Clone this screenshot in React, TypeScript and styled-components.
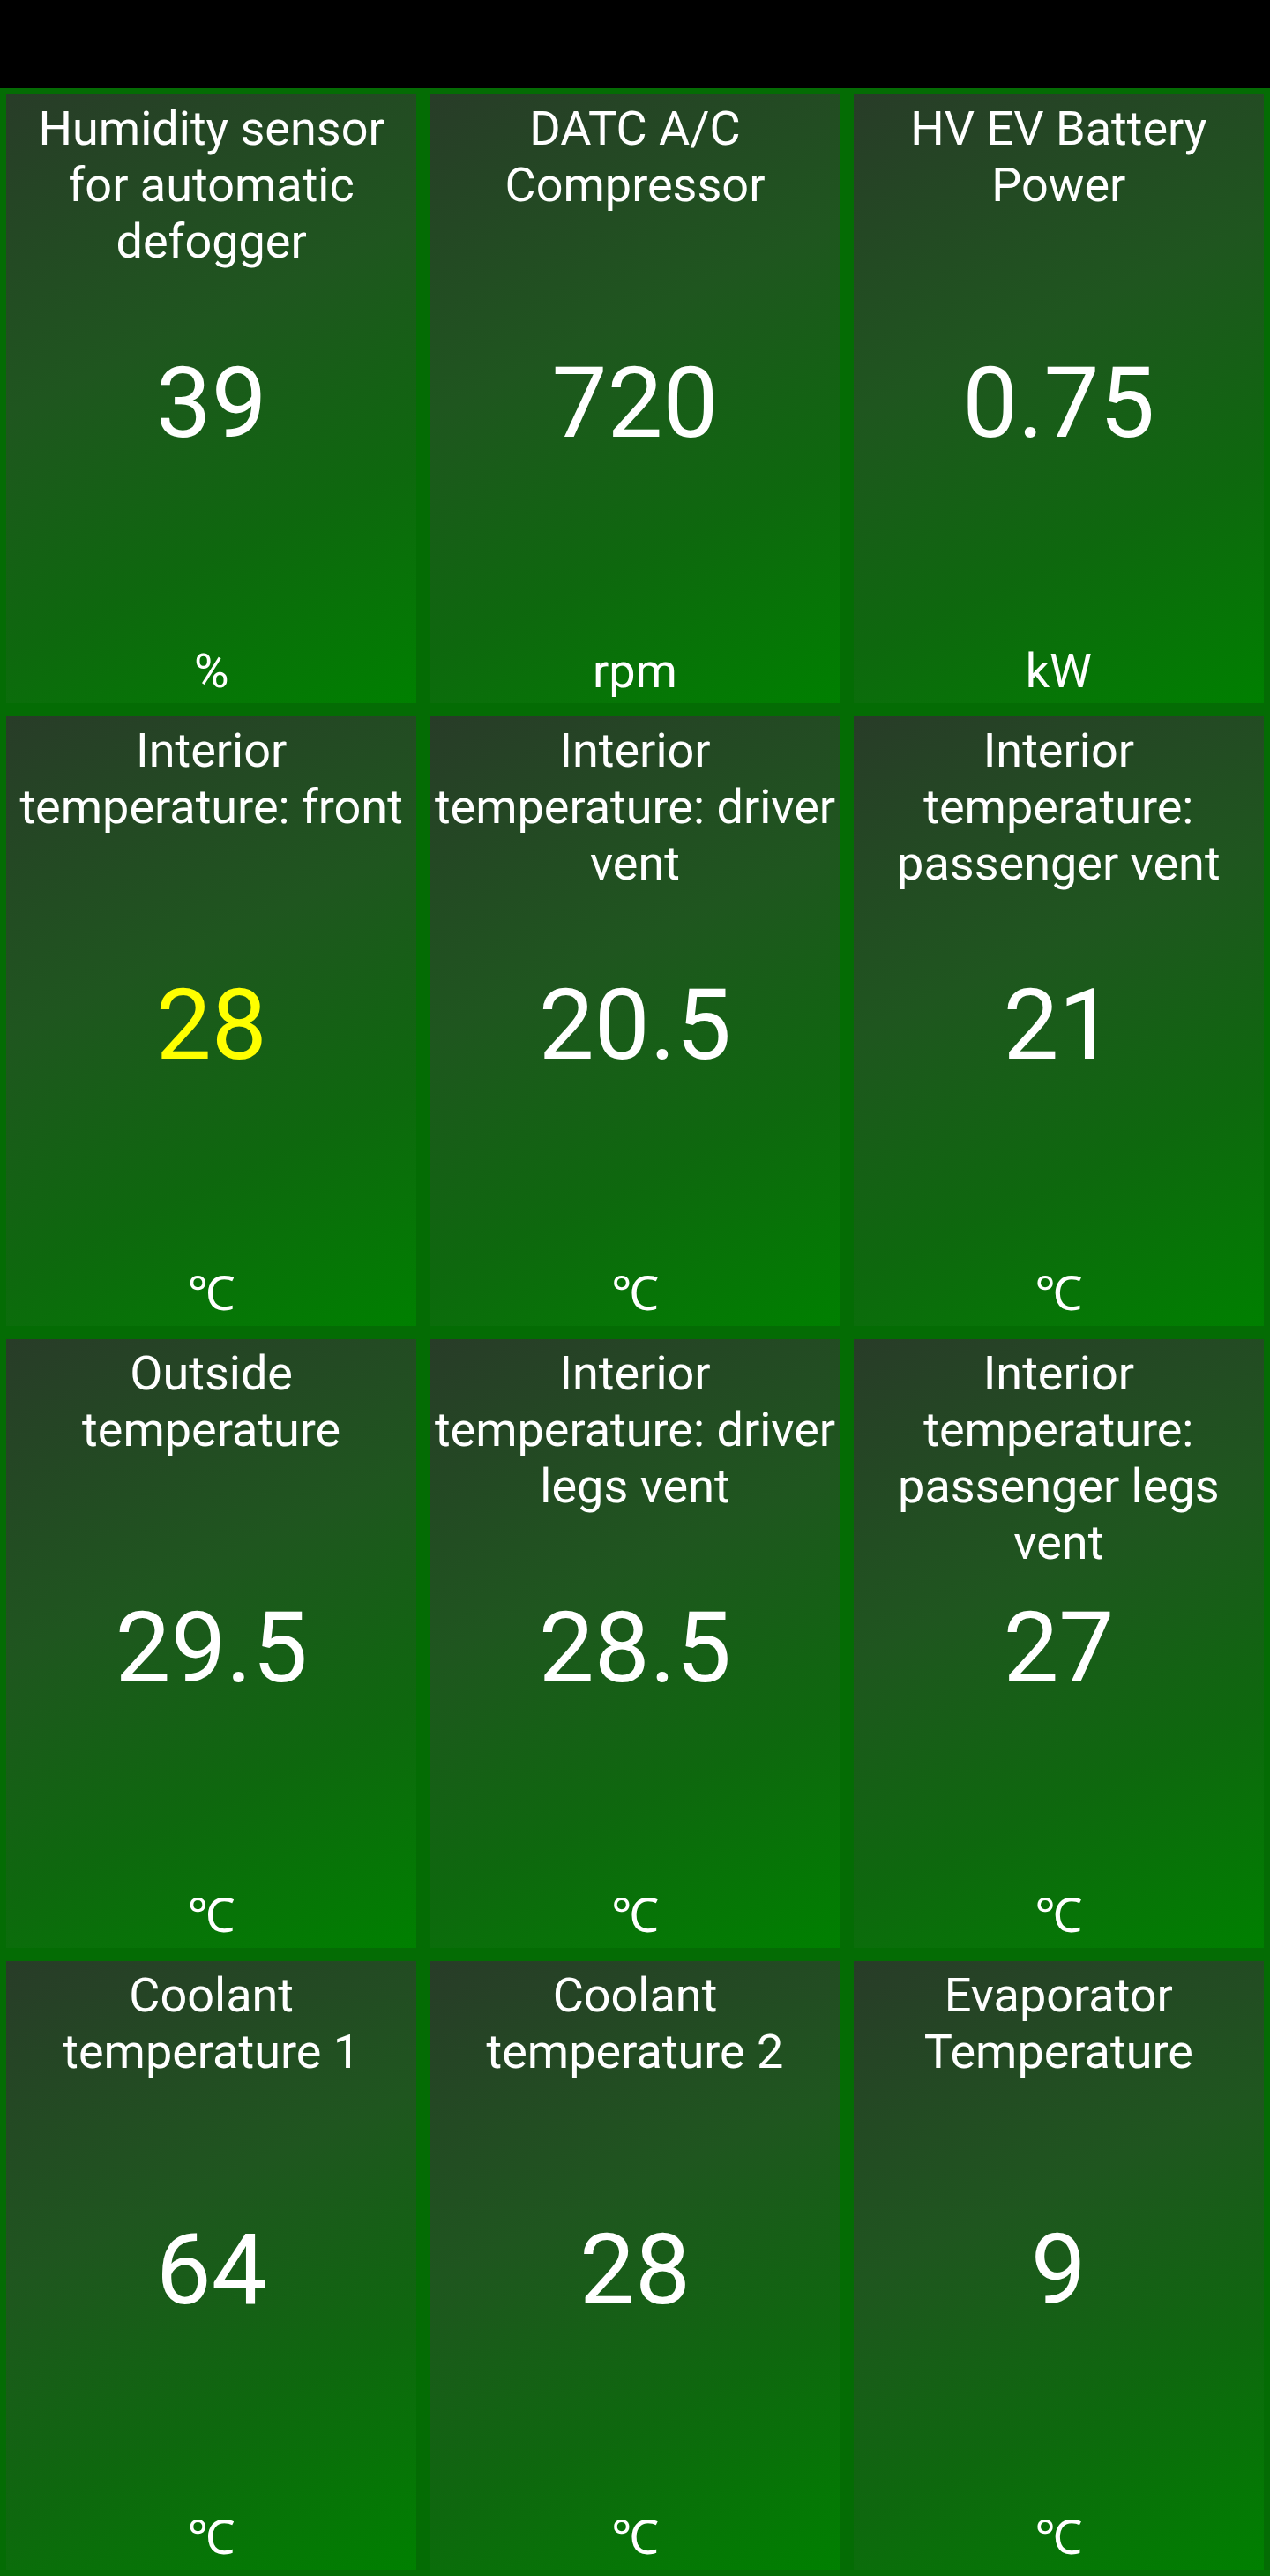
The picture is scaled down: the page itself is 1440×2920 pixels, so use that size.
import { createGlobalStyle, styled } from "styled-components";

type Reading = {
  title: string;
  value: string;
  unit: string;
  warn?: boolean;
};

const readings: Reading[] = [
  { title: "Humidity sensor for automatic defogger", value: "39", unit: "%" },
  { title: "DATC A/C Compressor", value: "720", unit: "rpm" },
  { title: "HV EV Battery Power", value: "0.75", unit: "kW" },
  { title: "Interior temperature: front", value: "28", unit: "℃", warn: true },
  { title: "Interior temperature: driver vent", value: "20.5", unit: "℃" },
  { title: "Interior temperature: passenger vent", value: "21", unit: "℃" },
  { title: "Outside temperature", value: "29.5", unit: "℃" },
  { title: "Interior temperature: driver legs vent", value: "28.5", unit: "℃" },
  { title: "Interior temperature: passenger legs vent", value: "27", unit: "℃" },
  { title: "Coolant temperature 1", value: "64", unit: "℃" },
  { title: "Coolant temperature 2", value: "28", unit: "℃" },
  { title: "Evaporator Temperature", value: "9", unit: "℃" },
];

const GlobalStyle = createGlobalStyle`
  html, body {
    margin: 0;
    padding: 0;
    background: #000;
  }
  body {
    font-family: Roboto, "Noto Sans", "DejaVu Sans", sans-serif;
    color: #fff;
  }
`;

const Screen = styled.div`
  width: 1440px;
  height: 2920px;
  display: flex;
  flex-direction: column;
  background: #000;
`;

const StatusBar = styled.div`
  height: 100px;
  flex: none;
  background: #000;
`;

const Grid = styled.main`
  flex: 1;
  display: grid;
  grid-template-columns: repeat(3, 1fr);
  grid-template-rows: repeat(4, 1fr);
  gap: 15px;
  padding: 7px;
  background: #046c04;
`;

const Tile = styled.section`
  display: grid;
  grid-template-rows: 1fr;
  grid-template-columns: 1fr;
  min-width: 0;
  background: linear-gradient(155deg, #283c28 0%, #1f561f 40%, #0e680e 70%, #008000 100%);
  text-align: center;
`;

const Title = styled.div`
  grid-area: 1 / 1;
  align-self: start;
  padding: 7px 4px 0;
  font-size: 54px;
  line-height: 64px;
`;

const Value = styled.div<{ $warn?: boolean }>`
  grid-area: 1 / 1;
  align-self: center;
  margin-top: 10px;
  font-size: 112px;
  line-height: 132px;
  color: ${(p) => (p.$warn ? "#ffff00" : "#fff")};
`;

const Unit = styled.div`
  grid-area: 1 / 1;
  align-self: end;
  padding-bottom: 4px;
  font-size: 54px;
  line-height: 64px;
`;

export default function App() {
  return (
    <>
      <GlobalStyle />
      <Screen>
        <StatusBar />
        <Grid>
          {readings.map((r) => (
            <Tile key={r.title}>
              <Title>{r.title}</Title>
              <Value $warn={r.warn}>{r.value}</Value>
              <Unit>{r.unit}</Unit>
            </Tile>
          ))}
        </Grid>
      </Screen>
    </>
  );
}
